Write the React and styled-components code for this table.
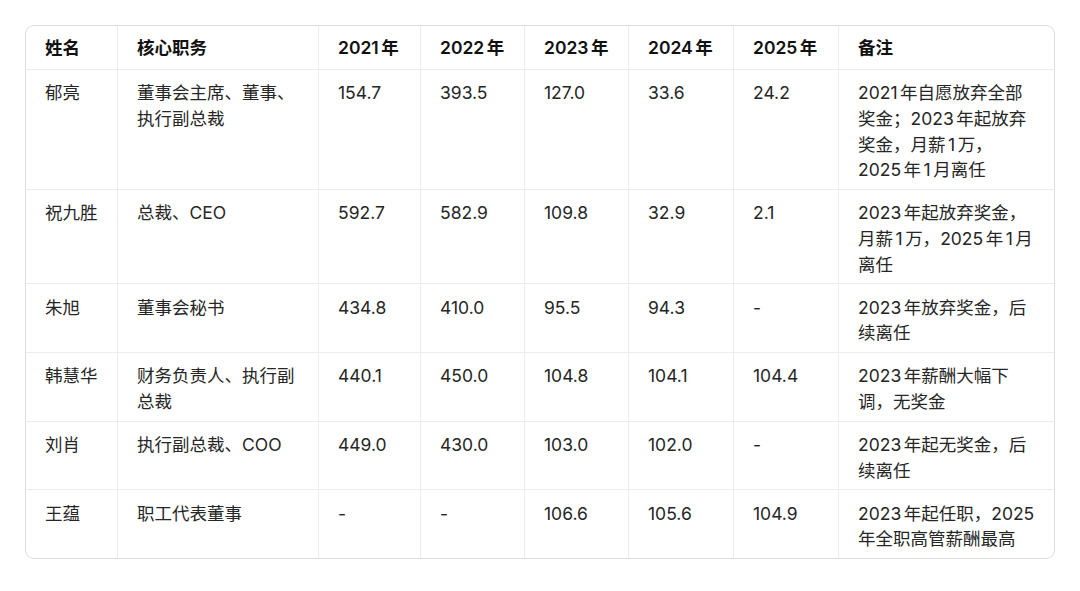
import React from "react";
import styled, { createGlobalStyle } from "styled-components";

const Global = createGlobalStyle`
  html, body { margin: 0; padding: 0; background: #ffffff; }
  body {
    font-family: "Inter", "Noto Sans CJK SC", sans-serif;
    -webkit-font-smoothing: antialiased;
  }
`;

const Page = styled.div`
  padding: 25px 25px 0 25px;
  width: 1080px;
  box-sizing: border-box;
`;

const Frame = styled.div`
  width: 1030px;
  border: 1px solid #dedede;
  border-radius: 9px;
  overflow: hidden;
  box-sizing: border-box;
  background: #fff;
`;

const Table = styled.table`
  width: 100%;
  table-layout: fixed;
  border-collapse: separate;
  border-spacing: 0;
  font-size: 17.5px;
  line-height: 25.6px;
  color: #262626;
`;

const Th = styled.th`
  text-align: left;
  font-weight: 600;
  color: #111;
  padding: 9px 18px 8.4px 19px;
  border-bottom: 1px solid #ececec;
  border-right: 1px solid #ececec;
  white-space: nowrap;
  &:last-child { border-right: none; }
`;

const Td = styled.td`
  vertical-align: top;
  padding: 10.5px 18px 6px 19px;
  border-right: 1px solid #ececec;
  border-bottom: ${(p) => (p.$last ? "none" : "1px solid #ececec")};
  &:last-child { border-right: none; }
`;

const NoteLine = styled.span`
  display: block;
  white-space: nowrap;
`;

const Latin = styled.span`
  margin-left: ${(p) => (p.$l ? "2.5px" : "0")};
  margin-right: ${(p) => (p.$r ? "2.5px" : "0")};
`;

const isIdeo = (ch) => !!ch && /[\u4e00-\u9fff]/.test(ch);

function Spaced({ text }) {
  const parts = text.split(/([A-Za-z0-9.]+)/).filter((s) => s !== "");
  return parts.map((part, i) => {
    if (/^[A-Za-z0-9.]+$/.test(part)) {
      const prev = parts[i - 1];
      const next = parts[i + 1];
      const l = prev ? isIdeo(prev[prev.length - 1]) : false;
      const r = next ? isIdeo(next[0]) : false;
      return (
        <Latin key={i} $l={l} $r={r}>
          {part}
        </Latin>
      );
    }
    return <React.Fragment key={i}>{part}</React.Fragment>;
  });
}

const cols = [92, 201, 102, 104, 104, 105, 105, 215];
const headers = ["姓名", "核心职务", "2021年", "2022年", "2023年", "2024年", "2025年", "备注"];

const rows = [
  {
    cells: ["郁亮", "董事会主席、董事、执行副总裁", "154.7", "393.5", "127.0", "33.6", "24.2"],
    note: ["2021年自愿放弃全部", "奖金；2023年起放弃", "奖金，月薪1万，", "2025年1月离任"],
  },
  {
    cells: ["祝九胜", "总裁、CEO", "592.7", "582.9", "109.8", "32.9", "2.1"],
    note: ["2023年起放弃奖金，", "月薪1万，2025年1月", "离任"],
  },
  {
    cells: ["朱旭", "董事会秘书", "434.8", "410.0", "95.5", "94.3", "-"],
    note: ["2023年放弃奖金，后", "续离任"],
  },
  {
    cells: ["韩慧华", "财务负责人、执行副总裁", "440.1", "450.0", "104.8", "104.1", "104.4"],
    note: ["2023年薪酬大幅下", "调，无奖金"],
  },
  {
    cells: ["刘肖", "执行副总裁、COO", "449.0", "430.0", "103.0", "102.0", "-"],
    note: ["2023年起无奖金，后", "续离任"],
  },
  {
    cells: ["王蕴", "职工代表董事", "-", "-", "106.6", "105.6", "104.9"],
    note: ["2023年起任职，2025", "年全职高管薪酬最高"],
  },
];

export default function App() {
  return (
    <Page>
      <Global />
      <Frame>
        <Table>
          <colgroup>
            {cols.map((w, i) => (
              <col key={i} style={{ width: w }} />
            ))}
          </colgroup>
          <thead>
            <tr>
              {headers.map((h) => (
                <Th key={h}>
                  <Spaced text={h} />
                </Th>
              ))}
            </tr>
          </thead>
          <tbody>
            {rows.map((r, ri) => {
              const last = ri === rows.length - 1;
              return (
                <tr key={ri}>
                  {r.cells.map((c, ci) => (
                    <Td key={ci} $last={last}>
                      <Spaced text={c} />
                    </Td>
                  ))}
                  <Td $last={last}>
                    {r.note.map((line, li) => (
                      <NoteLine key={li}>
                        <Spaced text={line} />
                      </NoteLine>
                    ))}
                  </Td>
                </tr>
              );
            })}
          </tbody>
        </Table>
      </Frame>
    </Page>
  );
}
